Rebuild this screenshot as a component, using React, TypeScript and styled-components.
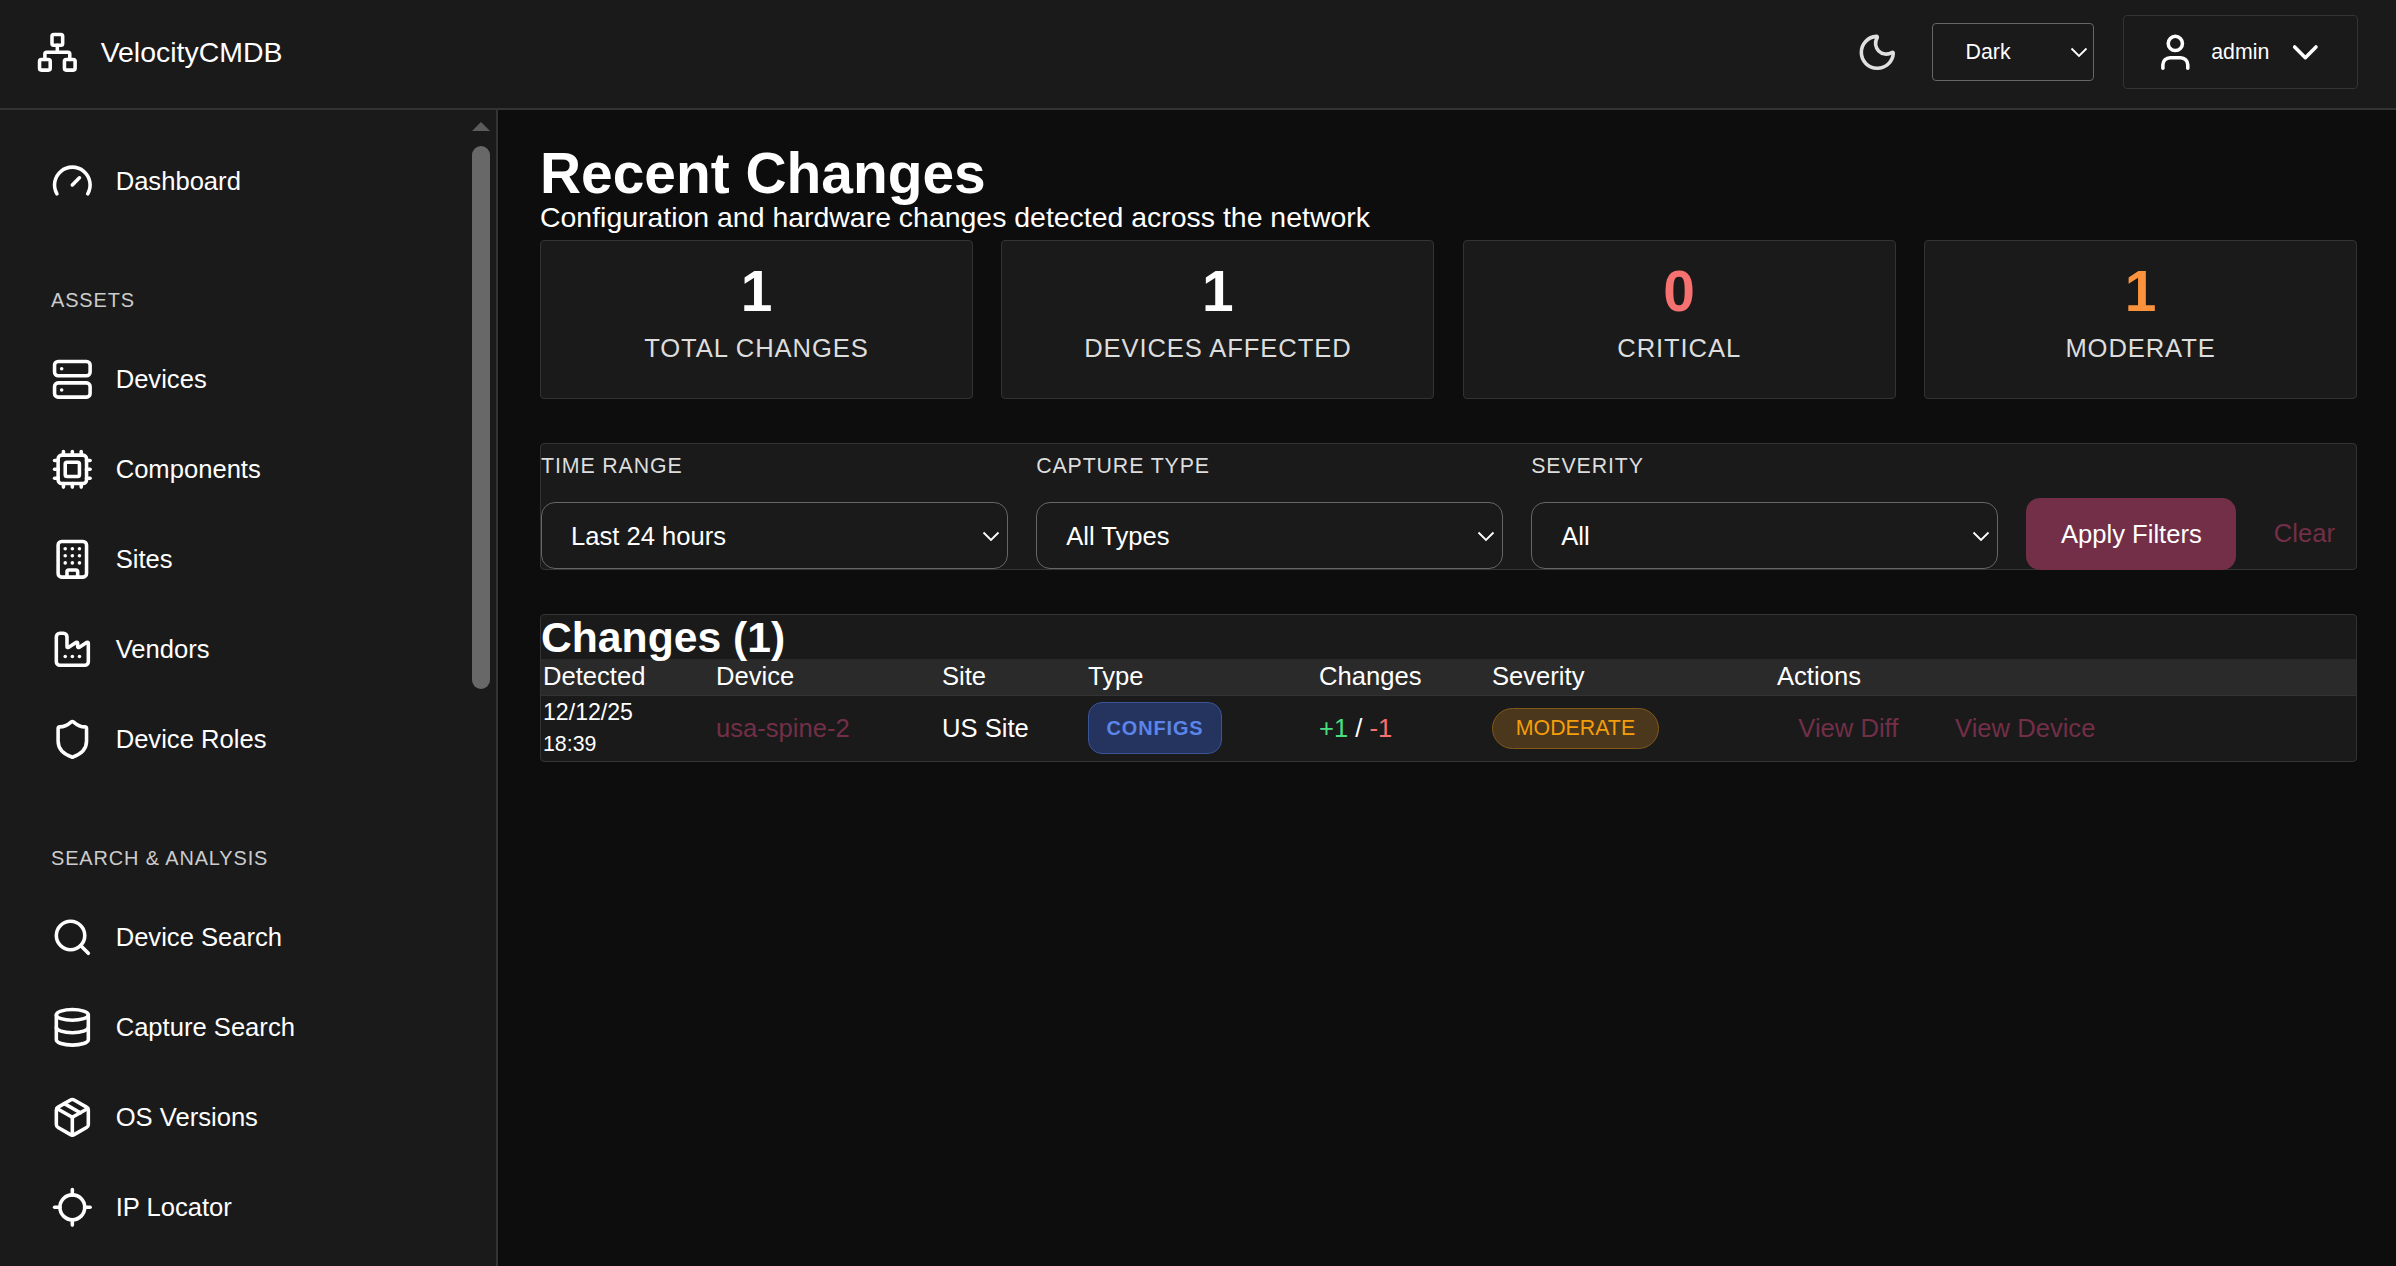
import React from "react";
import styled, { createGlobalStyle } from "styled-components";
import {
  Building,
  ChevronDown,
  Cpu,
  Database,
  Factory,
  Gauge,
  Locate,
  Moon,
  Network,
  Package,
  Search,
  Server,
  Shield,
  User,
} from "lucide-react";

const ICON = 42.67;
const ACCENT = "#722f47";

const GlobalStyle = createGlobalStyle`
  html, body {
    margin: 0;
    height: 100%;
    overflow: hidden;
    background: #0d0d0d;
  }
  body {
    font-family: "Liberation Sans", Arial, sans-serif;
    color: #fff;
  }
  * { box-sizing: border-box; }
`;

const Shell = styled.div`
  display: flex;
  flex-direction: column;
  height: 100vh;
`;

//header
const Header = styled.header`
  display: flex;
  align-items: center;
  flex: none;
  height: 110px;
  padding: 0 38px 4px 36px;
  background: #1a1a1a;
  border-bottom: 2px solid #333;
`;
const Brand = styled.div`
  display: flex;
  align-items: center;
  gap: 22px;
  font-size: 28.44px;
`;
const HeaderRight = styled.div`
  display: flex;
  align-items: center;
  margin-left: auto;
`;
const ThemeIcon = styled(Moon)`
  color: #e0e0e0;
  margin-right: 33px;
`;
const SelectWrap = styled.div`
  position: relative;
  display: flex;
`;
const ThemeSelect = styled.select`
  appearance: none;
  width: 162px;
  height: 58px;
  padding: 0 0 0 33px;
  background: #1a1a1a;
  border: 1px solid #666;
  border-radius: 4px;
  color: #fff;
  font: 21.33px "Liberation Sans", Arial, sans-serif;
`;
const Caret = styled.svg<{ $right: number }>`
  position: absolute;
  top: 50%;
  right: ${(p) => p.$right}px;
  width: 18px;
  height: 11px;
  margin-top: -5px;
  pointer-events: none;
`;
const UserMenu = styled.div`
  display: flex;
  align-items: center;
  gap: 15px;
  height: 74px;
  margin-left: 29px;
  padding: 0 30px;
  border: 1px solid #333;
  border-radius: 4px;
  font-size: 21.33px;
`;

//sidebar
const Body = styled.div`
  display: flex;
  flex: 1;
  min-height: 0;
`;
const Sidebar = styled.aside`
  position: relative;
  flex: none;
  width: 498px;
  padding-top: 26px;
  background: #1a1a1a;
  border-right: 2px solid #333;
  overflow: hidden;
`;
const NavItem = styled.div`
  display: flex;
  align-items: center;
  gap: 22px;
  height: 90px;
  padding-left: 51px;
  font-size: 25.6px;
`;
const SectionLabel = styled.div`
  height: 28px;
  margin: 60px 0 20px 51px;
  color: #ccc;
  font-size: 19.91px;
  line-height: 28px;
  letter-spacing: 0.89px;
`;
const ScrollUp = styled.div`
  position: absolute;
  top: 12px;
  right: 6px;
  width: 0;
  height: 0;
  border-left: 9px solid transparent;
  border-right: 9px solid transparent;
  border-bottom: 9px solid #5c5c5c;
`;
const ScrollThumb = styled.div`
  position: absolute;
  top: 36px;
  right: 6px;
  width: 18px;
  height: 543px;
  background: #686868;
  border-radius: 9px;
`;

//main
const Main = styled.main`
  flex: 1;
  min-width: 0;
  padding: 38px 39px 0 42px;
`;
const Title = styled.h1`
  margin: 0;
  font-size: 56.89px;
  font-weight: 700;
  line-height: 51px;
`;
const Subtitle = styled.p`
  margin: 0 0 5px;
  font-size: 28.44px;
  line-height: 36px;
`;
const StatGrid = styled.div`
  display: grid;
  grid-template-columns: repeat(4, 1fr);
  gap: 28.44px;
`;
const StatCard = styled.div`
  height: 159px;
  padding-top: 22px;
  text-align: center;
  background: #1a1a1a;
  border: 1px solid #333;
  border-radius: 4px;
`;
const StatValue = styled.div<{ $color?: string }>`
  color: ${(p) => p.$color || "#fff"};
  font-size: 56.89px;
  font-weight: 700;
  line-height: 57px;
`;
const StatLabel = styled.div`
  margin-top: 10px;
  color: #ddd;
  font-size: 25.6px;
  line-height: 36px;
  letter-spacing: 0.89px;
`;

//filters
const FilterPanel = styled.div`
  display: flex;
  align-items: flex-end;
  gap: 28.44px;
  margin-top: 44px;
  height: 127px;
  padding-right: 12px;
  background: #1a1a1a;
  border: 1px solid #333;
  border-radius: 4px;
`;
const FilterGroup = styled.div`
  flex: 1;
  min-width: 0;
`;
const FilterLabel = styled.div`
  margin-bottom: 14px;
  color: #ddd;
  font-size: 21.33px;
  line-height: 44px;
  letter-spacing: 0.89px;
`;
const FilterSelect = styled.select`
  appearance: none;
  display: block;
  width: 100%;
  height: 67px;
  padding: 0 0 0 29px;
  background: #1a1a1a;
  border: 1px solid #666;
  border-radius: 14px;
  color: #fff;
  font: 25.6px "Liberation Sans", Arial, sans-serif;
`;
const ApplyButton = styled.button`
  flex: none;
  width: 210px;
  height: 72px;
  margin-bottom: -1px;
  background: ${ACCENT};
  border: 0;
  border-radius: 14px;
  color: #fff;
  font: 25.6px "Liberation Sans", Arial, sans-serif;
`;
const ClearButton = styled.button`
  flex: none;
  height: 72px;
  margin-left: 0;
  padding: 0 9px;
  background: none;
  border: 0;
  color: ${ACCENT};
  font: 25.6px "Liberation Sans", Arial, sans-serif;
`;

//table
const TablePanel = styled.section`
  margin-top: 44px;
  background: #1a1a1a;
  border: 1px solid #333;
  border-radius: 4px;
`;
const TableTitle = styled.h2`
  margin: 0;
  font-size: 42.67px;
  font-weight: 700;
  line-height: 44px;
`;
const Table = styled.table`
  width: 100%;
  border-collapse: collapse;
  table-layout: fixed;
`;
const Th = styled.th<{ $w?: number }>`
  width: ${(p) => (p.$w ? `${p.$w}px` : "auto")};
  height: 36px;
  padding: 0 2px;
  background: #2a2a2a;
  border-bottom: 1px solid #333;
  font-size: 25.6px;
  font-weight: 400;
  text-align: left;
`;
const Td = styled.td`
  height: 66px;
  padding: 0 2px;
  font-size: 25.6px;
  vertical-align: middle;
`;
const DateLine = styled.div`
  font-size: 23.11px;
  line-height: 32px;
`;
const TimeLine = styled.div`
  font-size: 21.33px;
  line-height: 32px;
`;
const DeviceLink = styled.span`
  color: ${ACCENT};
`;
const TypeBadge = styled.span`
  display: inline-flex;
  align-items: center;
  justify-content: center;
  width: 134px;
  height: 52px;
  background: #25345e;
  border: 1px solid #3a5499;
  border-radius: 14px;
  color: #5b85ea;
  font-size: 19.91px;
  font-weight: 700;
  letter-spacing: 0.89px;
`;
const Delta = styled.span<{ $color: string }>`
  color: ${(p) => p.$color};
`;
const SeverityBadge = styled.span`
  display: inline-flex;
  align-items: center;
  justify-content: center;
  width: 167px;
  height: 41px;
  background: #4a371c;
  border: 1px solid #80591a;
  border-radius: 21px;
  color: #f59e0b;
  font-size: 21.33px;
`;
const Actions = styled.div`
  display: flex;
  gap: 14px;
`;
const ActionLink = styled.span`
  padding: 0 21.33px;
  color: ${ACCENT};
  font-size: 25.6px;
`;

const navTop = [{ icon: Gauge, label: "Dashboard" }];
const navAssets = [
  { icon: Server, label: "Devices" },
  { icon: Cpu, label: "Components" },
  { icon: Building, label: "Sites" },
  { icon: Factory, label: "Vendors" },
  { icon: Shield, label: "Device Roles" },
];
const navSearch = [
  { icon: Search, label: "Device Search" },
  { icon: Database, label: "Capture Search" },
  { icon: Package, label: "OS Versions" },
  { icon: Locate, label: "IP Locator" },
];

const stats = [
  { value: "1", label: "TOTAL CHANGES" },
  { value: "1", label: "DEVICES AFFECTED" },
  { value: "0", label: "CRITICAL", color: "#f87171" },
  { value: "1", label: "MODERATE", color: "#fb923c" },
];

const filters = [
  { label: "TIME RANGE", value: "Last 24 hours" },
  { label: "CAPTURE TYPE", value: "All Types" },
  { label: "SEVERITY", value: "All" },
];

const SelectCaret = ({ right }: { right: number }) => (
  <Caret $right={right} viewBox="0 0 18 11" fill="none" stroke="#fff" strokeWidth="1.8">
    <polyline points="1.5,1.5 9,9 16.5,1.5" />
  </Caret>
);

const NavList = ({ items }: { items: typeof navTop }) => (
  <>
    {items.map(({ icon: Icon, label }) => (
      <NavItem key={label}>
        <Icon size={ICON} />
        {label}
      </NavItem>
    ))}
  </>
);

export default function App() {
  return (
    <Shell>
      <GlobalStyle />
      <Header>
        <Brand>
          <Network size={ICON} />
          VelocityCMDB
        </Brand>
        <HeaderRight>
          <ThemeIcon size={ICON} />
          <SelectWrap>
            <ThemeSelect defaultValue="Dark">
              <option>Dark</option>
            </ThemeSelect>
            <SelectCaret right={6} />
          </SelectWrap>
          <UserMenu>
            <User size={ICON} />
            admin
            <ChevronDown size={ICON} />
          </UserMenu>
        </HeaderRight>
      </Header>
      <Body>
        <Sidebar>
          <NavList items={navTop} />
          <SectionLabel>ASSETS</SectionLabel>
          <NavList items={navAssets} />
          <SectionLabel>SEARCH &amp; ANALYSIS</SectionLabel>
          <NavList items={navSearch} />
          <ScrollUp />
          <ScrollThumb />
        </Sidebar>
        <Main>
          <Title>Recent Changes</Title>
          <Subtitle>Configuration and hardware changes detected across the network</Subtitle>
          <StatGrid>
            {stats.map((s) => (
              <StatCard key={s.label}>
                <StatValue $color={s.color}>{s.value}</StatValue>
                <StatLabel>{s.label}</StatLabel>
              </StatCard>
            ))}
          </StatGrid>
          <FilterPanel>
            {filters.map((f) => (
              <FilterGroup key={f.label}>
                <FilterLabel>{f.label}</FilterLabel>
                <SelectWrap>
                  <FilterSelect defaultValue={f.value}>
                    <option>{f.value}</option>
                  </FilterSelect>
                  <SelectCaret right={8} />
                </SelectWrap>
              </FilterGroup>
            ))}
            <ApplyButton>Apply Filters</ApplyButton>
            <ClearButton>Clear</ClearButton>
          </FilterPanel>
          <TablePanel>
            <TableTitle>Changes (1)</TableTitle>
            <Table>
              <thead>
                <tr>
                  <Th $w={173}>Detected</Th>
                  <Th $w={226}>Device</Th>
                  <Th $w={146}>Site</Th>
                  <Th $w={231}>Type</Th>
                  <Th $w={173}>Changes</Th>
                  <Th $w={285}>Severity</Th>
                  <Th>Actions</Th>
                </tr>
              </thead>
              <tbody>
                <tr>
                  <Td>
                    <DateLine>12/12/25</DateLine>
                    <TimeLine>18:39</TimeLine>
                  </Td>
                  <Td>
                    <DeviceLink>usa-spine-2</DeviceLink>
                  </Td>
                  <Td>US Site</Td>
                  <Td>
                    <TypeBadge>CONFIGS</TypeBadge>
                  </Td>
                  <Td>
                    <Delta $color="#4ade80">+1</Delta> / <Delta $color="#f87171">-1</Delta>
                  </Td>
                  <Td>
                    <SeverityBadge>MODERATE</SeverityBadge>
                  </Td>
                  <Td>
                    <Actions>
                      <ActionLink>View Diff</ActionLink>
                      <ActionLink>View Device</ActionLink>
                    </Actions>
                  </Td>
                </tr>
              </tbody>
            </Table>
          </TablePanel>
        </Main>
      </Body>
    </Shell>
  );
}
